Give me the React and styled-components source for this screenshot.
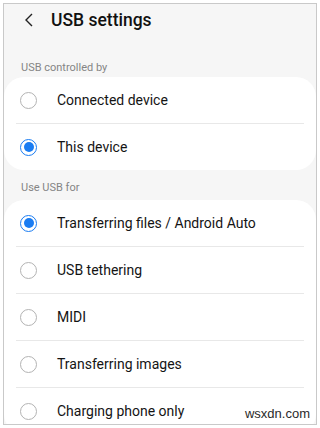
import React from 'react';
import styled, { createGlobalStyle } from 'styled-components';

const GlobalStyle = createGlobalStyle`
  html, body {
    margin: 0;
    padding: 0;
    background: #ffffff;
    font-family: Roboto, "Noto Sans", Arial, sans-serif;
  }
`;

const Frame = styled.div`
  position: relative;
  box-sizing: border-box;
  width: 314px;
  height: 422px;
  margin: 3px;
  border: 1px solid #c9c9c9;
  background: #f6f6f6;
  overflow: hidden;
`;

const Header = styled.div`
  display: flex;
  align-items: center;
  height: 32px;
  padding-left: 18px;
`;

const BackButton = styled.div`
  display: flex;
  align-items: center;
  justify-content: center;
  width: 14px;
  height: 20px;
  margin-right: 15px;
`;

const Title = styled.h1`
  margin: 0;
  font-size: 17.5px;
  font-weight: 500;
  color: #111111;
`;

const SectionLabel = styled.div`
  padding: ${p => p.$top}px 0 ${p => p.$bottom}px 17px;
  font-size: 11px;
  line-height: 14px;
  color: #858585;
`;

const Card = styled.div`
  background: #ffffff;
  border-radius: 20px;
  display: flex;
  flex-direction: column;
`;

const Row = styled.div`
  display: flex;
  align-items: center;
  height: 46px;
  padding-left: 16px;
`;

const Divider = styled.div`
  height: 1px;
  margin: 0 12px;
  background: #e8e8e8;
`;

const Radio = styled.span`
  box-sizing: border-box;
  width: 17px;
  height: 17px;
  border-radius: 50%;
  border: 1.5px solid ${p => (p.$checked ? '#1a7cf2' : '#b3b3b3')};
  display: flex;
  align-items: center;
  justify-content: center;
  flex-shrink: 0;

  &::after {
    content: '';
    display: ${p => (p.$checked ? 'block' : 'none')};
    width: 10px;
    height: 10px;
    border-radius: 50%;
    background: #1a7cf2;
  }
`;

const Label = styled.span`
  margin-left: 20px;
  font-size: 14px;
  color: #141414;
`;

const Watermark = styled.div`
  position: absolute;
  right: 6px;
  bottom: 3px;
  font-family: "Liberation Sans", Arial, sans-serif;
  font-size: 13px;
  color: #2a2a2a;
`;

function Options({ items, selected }) {
  return (
    <Card>
      {items.map((item, i) => (
        <React.Fragment key={item}>
          {i > 0 && <Divider />}
          <Row>
            <Radio $checked={i === selected} />
            <Label>{item}</Label>
          </Row>
        </React.Fragment>
      ))}
    </Card>
  );
}

export default function App() {
  return (
    <>
      <GlobalStyle />
      <Frame>
        <Header>
          <BackButton>
            <svg width="10" height="14" viewBox="0 0 10 14">
              <path d="M8 1 L2 7 L8 13" fill="none" stroke="#222" strokeWidth="1.4" />
            </svg>
          </BackButton>
          <Title>USB settings</Title>
        </Header>
        <SectionLabel $top={25} $bottom={2}>USB controlled by</SectionLabel>
        <Options items={['Connected device', 'This device']} selected={1} />
        <SectionLabel $top={11} $bottom={5}>Use USB for</SectionLabel>
        <Options
          items={[
            'Transferring files / Android Auto',
            'USB tethering',
            'MIDI',
            'Transferring images',
            'Charging phone only',
          ]}
          selected={0}
        />
        <Watermark>wsxdn.com</Watermark>
      </Frame>
    </>
  );
}
